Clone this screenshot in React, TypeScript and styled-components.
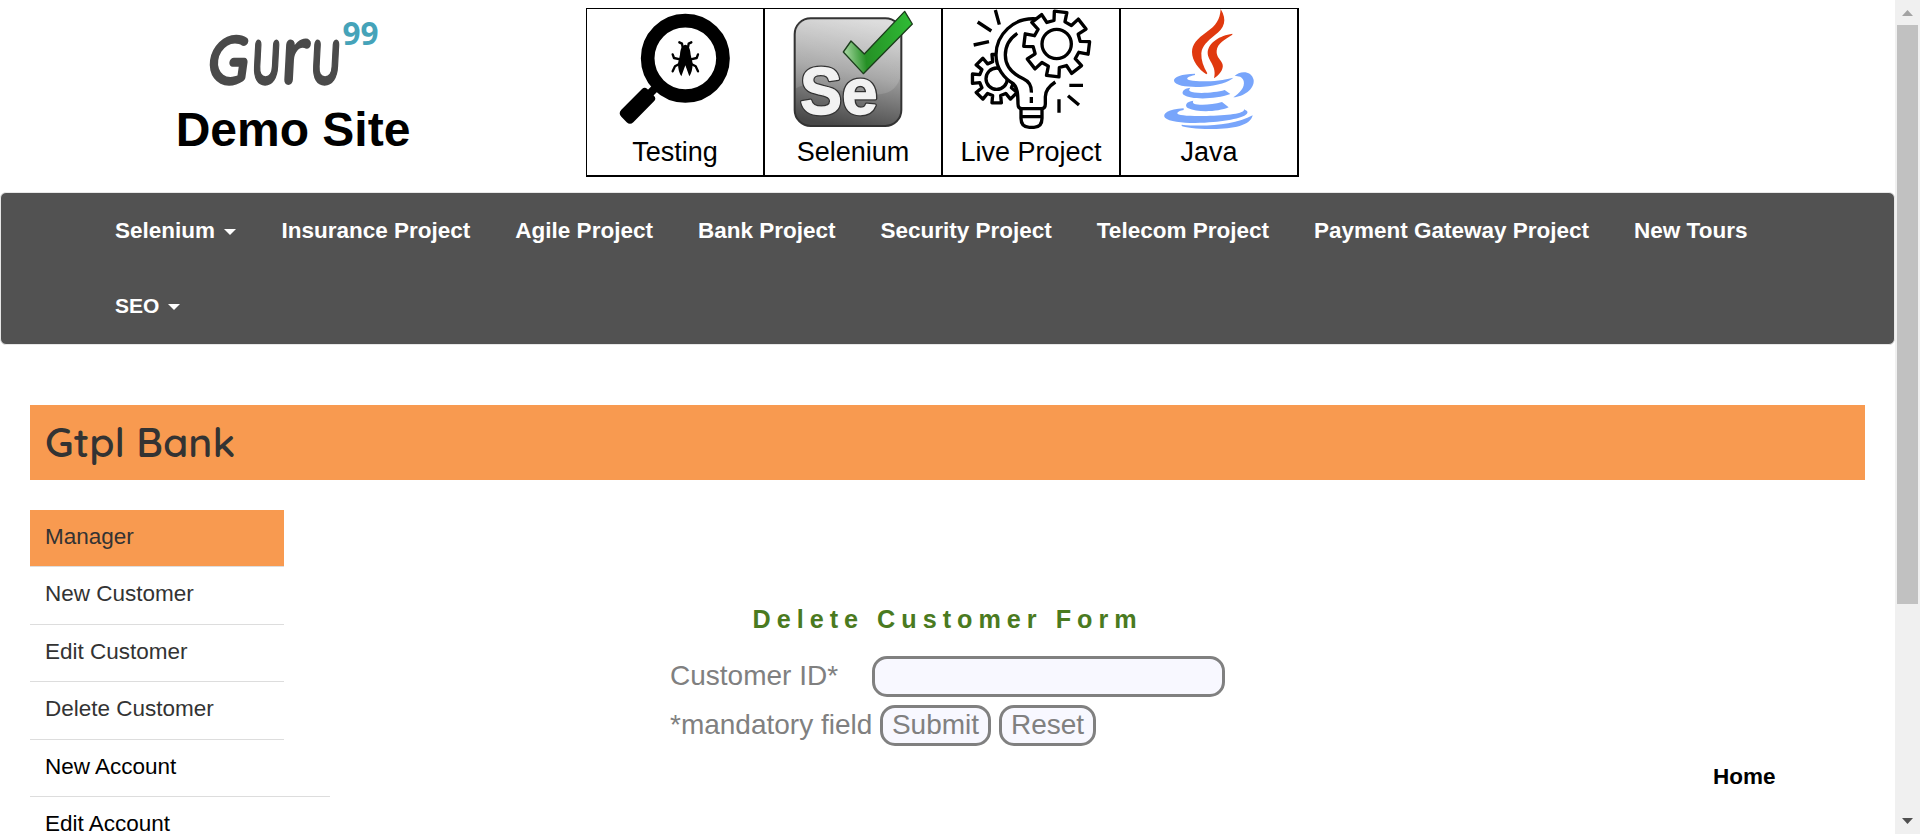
import React from "react";
import styled, { createGlobalStyle } from "styled-components";

const GlobalStyle = createGlobalStyle`
  * { box-sizing: border-box; }
  body {
    margin: 0;
    background: #fff;
    font-family: "Liberation Sans", Arial, sans-serif;
    overflow: hidden;
  }
`;

const Window = styled.div`
  display: flex;
  height: 834px;
  overflow: hidden;
`;

const Page = styled.div`
  flex: 1;
  min-width: 0;
  height: 834px;
  overflow: hidden;
`;

/* Header */

const Header = styled.header`
  display: flex;
  align-items: flex-start;
  height: 192px;
`;

const Brand = styled.div`
  width: 586px;
  padding-top: 15px;
  display: flex;
  flex-direction: column;
  align-items: center;
`;

const BrandTitle = styled.h2`
  margin: 7px 0 0;
  font-size: 48px;
  line-height: 56px;
  font-weight: 700;
  color: #000;
`;

const LogoImage = styled.svg`
  display: block;
  width: 190px;
  height: 80px;
  overflow: visible;
`;

const CourseTable = styled.div`
  display: flex;
  margin-top: 8px;
  border-top: 1px solid #000;
  border-left: 1px solid #000;
`;

const CourseCell = styled.div`
  width: 178px;
  height: 168px;
  border-right: 2px solid #000;
  border-bottom: 2px solid #000;
  display: flex;
  flex-direction: column;
  align-items: center;
`;

const CourseIcon = styled.svg`
  display: block;
  width: 120px;
  height: 120px;
  overflow: visible;
`;

const CourseLabel = styled.span`
  font-size: 27px;
  line-height: 46px;
  color: #000;
`;

/* Navigation */

const NavBar = styled.nav`
  height: 153px;
  border: 1px solid #e7e7e7;
  border-radius: 6px;
  background: #525252;
  padding: 0 91.5px;
`;

const NavList = styled.ul`
  display: flex;
  flex-wrap: wrap;
  margin: 0;
  padding: 0;
  list-style: none;
`;

const NavItem = styled.li<{ $small?: boolean }>`
  display: flex;
  align-items: center;
  padding: 0 22.5px;
  height: 75px;
  font-size: ${(p) => (p.$small ? 21 : 22.5)}px;
  font-weight: 700;
  color: #fff;
  white-space: nowrap;
`;

const Caret = styled.span`
  margin: 3px 0.5px 0 9px;
  border-top: 6px solid #fff;
  border-left: 6px solid transparent;
  border-right: 6px solid transparent;
`;

/* Bank section */

const BankBanner = styled.div`
  margin: 60px 30px 30px;
  height: 75px;
  padding-left: 15px;
  display: flex;
  align-items: center;
  background: #f89a50;
`;

const BankTitle = styled.h2`
  margin: 0 0 2px;
  font-family: Quicksand, Inter, sans-serif;
  font-size: 40.8px;
  font-weight: 600;
  color: #333;
`;

const Columns = styled.div`
  display: flex;
  align-items: flex-start;
  padding-left: 30px;
`;

const Menu = styled.ul`
  width: 640px;
  margin: 0;
  padding: 0;
  list-style: none;
`;

const MenuItem = styled.li<{ $active?: boolean; $wide?: boolean }>`
  width: ${(p) => (p.$wide ? 300 : 254)}px;
  height: 57.4px;
  padding-left: 15px;
  border-bottom: 1px solid #ddd;
  background: ${(p) => (p.$active ? "#f89a50" : "transparent")};
  color: ${(p) => (p.$wide ? "#000" : "#333")};
  font-size: 22.5px;
  line-height: 54.5px;
`;

const Form = styled.form`
  width: 556px;
  padding-top: 94px;
  color: #808080;
  font-size: 28px;
`;

const FormTitle = styled.p`
  margin: 0 0 22px 82.5px;
  font-size: 25.2px;
  line-height: 30px;
  font-weight: 700;
  letter-spacing: 6px;
  color: #4a7a20;
  white-space: nowrap;
`;

const FormRow = styled.div`
  display: flex;
  align-items: center;
  height: 41px;
  margin-bottom: 8px;
`;

const FieldLabel = styled.label`
  width: 202px;
  margin-right: ${(p: { $gap?: number }) => p.$gap ?? 0}px;
  line-height: 38px;
  padding-bottom: 1px;
  white-space: nowrap;
`;

const TextInput = styled.input`
  width: 353px;
  height: 41px;
  border: 3px solid #808080;
  border-radius: 15px;
  background: #f8f8ff;
  outline: none;
`;

const FormButton = styled.button<{ $width: number }>`
  width: ${(p) => p.$width}px;
  height: 41px;
  margin-right: 8px;
  padding: 0 0 2px;
  border: 3px solid #808080;
  border-radius: 15px;
  background: #f8f8ff;
  color: #808080;
  font-family: inherit;
  font-size: 28px;
  line-height: 32px;
`;

const HomeLink = styled.a`
  margin: 253px 0 0 487px;
  font-size: 22.5px;
  line-height: 28px;
  font-weight: 700;
  color: #000;
`;

/* Scrollbar */

const ScrollTrack = styled.div`
  width: 25px;
  height: 834px;
  padding: 10px 0;
  background: #f0f0f0;
  display: flex;
  flex-direction: column;
  align-items: center;
`;

const ArrowIcon = styled.svg`
  display: block;
  width: 11px;
  height: 6px;
`;

const ScrollThumb = styled.div`
  width: 21px;
  height: 579px;
  margin: 9px 0 auto;
  background: #c1c1c1;
`;

/* Drawings */

const GuruLogo = () => (
  <LogoImage viewBox="198 15 190 80">
    <g fill="#4a4a4a" stroke="#4a4a4a" strokeWidth="2" strokeLinejoin="round" fontFamily="Quicksand, Lato, sans-serif" fontWeight="600">
      <text transform="translate(205 84) skewX(-8) scale(.88 1)" fontSize="68">G</text>
      <text transform="translate(250 84) skewX(-3) scale(.58 .92)" fontSize="90">u</text>
      <text transform="translate(280 84) skewX(-3) scale(.78 .92)" fontSize="90">r</text>
      <text transform="translate(309 84) skewX(-3) scale(.6 .92)" fontSize="90">u</text>
    </g>
    <text x="342.5" y="44.5" fontFamily="Open Sans" fontWeight="700" fontSize="31.5" fill="#45a3b9">99</text>
  </LogoImage>
);

const TestingIcon = () => (
  <CourseIcon viewBox="105 27 360 360">
    <circle cx="316" cy="175" r="113" fill="none" stroke="#000" strokeWidth="41" />
    <path d="M202 288L234 256" stroke="#000" strokeWidth="24" />
    <path d="M186 267Q194 260 202 267L222 287Q230 296 222 304L160 367Q150 376 140 367L124 350Q114 339 124 329Z" fill="#000" />
    <path d="M316 134C329 137 331 151 332 164L338 190Q338 214 328 229L316 196L304 229Q294 214 294 190L300 164C301 151 303 137 316 134Z" fill="#000" />
    <path
      d="M308 142L306 131L298 127M324 142L326 131L334 127M300 178L282 174L278 163M332 178L350 174L354 163M298 192L285 199L278 214M334 192L347 199L354 214"
      fill="none" stroke="#000" strokeWidth="7" strokeLinecap="round" strokeLinejoin="round"
    />
  </CourseIcon>
);

const SeleniumIcon = () => (
  <CourseIcon viewBox="99 27 360 360">
    <defs>
      <linearGradient id="tile" x1="0.6" y1="0" x2="0.4" y2="1">
        <stop offset="0" stopColor="#d2d2d2" />
        <stop offset="0.5" stopColor="#999" />
        <stop offset="1" stopColor="#484848" />
      </linearGradient>
      <linearGradient id="gloss" x1="0" y1="0" x2="0" y2="1">
        <stop offset="0" stopColor="#fff" stopOpacity="0.25" />
        <stop offset="1" stopColor="#fff" stopOpacity="0.12" />
      </linearGradient>
      <linearGradient id="tick" x1="0" y1="0.5" x2="1" y2="0.4">
        <stop offset="0" stopColor="#a5d6a0" />
        <stop offset="0.3" stopColor="#259025" />
        <stop offset="1" stopColor="#2fbb35" />
      </linearGradient>
    </defs>
    <rect x="104" y="55" width="320" height="323" rx="48" fill="url(#tile)" stroke="#333" strokeWidth="6" />
    <path d="M108 100Q108 60 152 59H376Q420 60 420 104V235C405 280 370 290 300 282C210 270 150 240 108 265Z" fill="url(#gloss)" />
    <g fontFamily="Liberation Sans" fontWeight="700" strokeLinejoin="round">
      <g fill="#333" stroke="#333" strokeWidth="12">
        <text x="120" y="341" fontSize="202" textLength="126" lengthAdjust="spacingAndGlyphs">S</text>
        <text x="246" y="341" fontSize="192">e</text>
      </g>
      <g fill="#f2f2f2" stroke="#f2f2f2" strokeWidth="4">
        <text x="120" y="341" fontSize="202" textLength="126" lengthAdjust="spacingAndGlyphs">S</text>
        <text x="246" y="341" fontSize="192">e</text>
      </g>
    </g>
    <path d="M250 156L273 123L313 162L434 34L457 72L310 221Z" fill="url(#tick)" stroke="#1c3d1c" strokeWidth="4" strokeLinejoin="round" />
  </CourseIcon>
);

function gearPath(cx: number, cy: number, outer: number, root: number, turn: number) {
  const points: string[] = [];
  for (let i = 0; i < 8; i++) {
    const mid = turn + i * 45;
    const corners: [number, number][] = [[-13.5, root], [-11, outer], [11, outer], [13.5, root]];
    for (const [offset, r] of corners) {
      const a = ((mid + offset) * Math.PI) / 180;
      points.push(`${(cx + r * Math.sin(a)).toFixed(1)} ${(cy - r * Math.cos(a)).toFixed(1)}`);
    }
  }
  return `M${points.join("L")}Z`;
}

const LiveProjectIcon = () => (
  <CourseIcon viewBox="93 27 360 360">
    <g fill="#fff" stroke="#000" strokeWidth="10" strokeLinejoin="round">
      <path d={gearPath(170, 236, 74, 52, 0)} />
      <circle cx="170" cy="236" r="32" />
      <path d="M292 57C220 50 168 105 168 165C168 205 193 235 220 251C232 262 234 280 234 312Q234 326 246 326H304Q316 326 316 312V290C316 270 328 258 346 246L360 180Z" stroke="none" />
      <path d="M292 57C220 50 168 105 168 165C168 205 193 235 220 251C232 262 234 280 234 312Q234 326 246 326H304Q316 326 316 312V290C316 270 328 258 346 246" fill="none" />
      <path d="M232 100C205 118 196 140 196 165C196 205 225 225 250 236C268 244 275 258 274 278M274 291V309" fill="none" />
      <path d="M243 326V355Q243 382 268 382H282Q306 382 306 355V326M243 350H306" fill="none" />
      <path d={gearPath(350, 132, 99, 71, 7)} />
      <circle cx="350" cy="132" r="44" />
      <path d="M166 30L178 74M113 66L154 93M101 135L147 125M388 256H429M384 287L417 315M357 298V338" fill="none" />
    </g>
  </CourseIcon>
);

const JavaIcon = () => (
  <CourseIcon viewBox="117 27 360 360">
    <g fill="#e0390f">
      <path d="M332 27C330 60 318 76 290 96C262 116 246 132 246 156C246 182 266 208 289 223L292 220C280 200 273 180 274 160C276 138 292 124 314 106C344 84 352 60 332 27Z" />
      <path d="M367 101C330 106 294 128 293 158C293 182 322 198 312 235C328 224 341 208 338 194C335 180 318 172 320 152C322 130 345 118 367 104Z" />
    </g>
    <g fill="#78a5fb">
      <path d="M255 221C215 222 190 230 192 243C196 260 245 262 280 260C322 257 358 246 370 233C330 244 270 247 240 241C222 236 236 229 255 225Z" />
      <path d="M374 228C388 212 425 210 431 240C434 268 400 290 370 292C388 280 406 262 401 243C397 230 386 228 374 228Z" />
      <path d="M241 263C220 265 212 278 222 285C242 299 315 299 361 282L344 270C315 279 255 282 240 274C236 270 238 267 241 263Z" />
      <path d="M250 302C228 304 222 318 235 325C262 338 325 336 356 322L336 306C305 315 266 316 252 311C248 308 248 305 250 302Z" />
      <path d="M221 325C175 327 155 342 165 353C182 370 260 371 310 366C370 361 422 348 411 333L402 328C406 341 350 347 290 348C240 349 202 347 202 340C202 335 212 331 221 330Z" />
      <path d="M215 374C280 381 375 376 428 346C422 378 365 388 300 387C260 387 222 382 215 378Z" />
    </g>
  </CourseIcon>
);

const courses = [
  { name: "Testing", Icon: TestingIcon },
  { name: "Selenium", Icon: SeleniumIcon },
  { name: "Live Project", Icon: LiveProjectIcon },
  { name: "Java", Icon: JavaIcon },
];

const navItems = [
  { label: "Selenium", menu: true },
  { label: "Insurance Project" },
  { label: "Agile Project" },
  { label: "Bank Project" },
  { label: "Security Project" },
  { label: "Telecom Project" },
  { label: "Payment Gateway Project" },
  { label: "New Tours" },
  { label: "SEO", menu: true, small: true },
];

const menuItems = [
  { label: "Manager", active: true },
  { label: "New Customer" },
  { label: "Edit Customer" },
  { label: "Delete Customer" },
  { label: "New Account", wide: true },
  { label: "Edit Account", wide: true },
];

export default function App() {
  return (
    <Window>
      <GlobalStyle />
      <Page>
        <Header>
          <Brand>
            <GuruLogo />
            <BrandTitle>Demo Site</BrandTitle>
          </Brand>
          <CourseTable>
            {courses.map(({ name, Icon }) => (
              <CourseCell key={name}>
                <Icon />
                <CourseLabel>{name}</CourseLabel>
              </CourseCell>
            ))}
          </CourseTable>
        </Header>
        <NavBar>
          <NavList>
            {navItems.map((item) => (
              <NavItem key={item.label} $small={item.small}>
                {item.label}
                {item.menu && <Caret />}
              </NavItem>
            ))}
          </NavList>
        </NavBar>
        <BankBanner>
          <BankTitle>Gtpl Bank</BankTitle>
        </BankBanner>
        <Columns>
          <Menu>
            {menuItems.map((item) => (
              <MenuItem key={item.label} $active={item.active} $wide={item.wide}>
                {item.label}
              </MenuItem>
            ))}
          </Menu>
          <Form>
            <FormTitle>Delete Customer Form</FormTitle>
            <FormRow>
              <FieldLabel htmlFor="cusid">Customer ID*</FieldLabel>
              <TextInput id="cusid" type="text" />
            </FormRow>
            <FormRow>
              <FieldLabel as="span" $gap={8}>*mandatory field</FieldLabel>
              <FormButton type="button" $width={111}>Submit</FormButton>
              <FormButton type="button" $width={97}>Reset</FormButton>
            </FormRow>
          </Form>
          <HomeLink>Home</HomeLink>
        </Columns>
      </Page>
      <ScrollTrack>
        <ArrowIcon viewBox="0 0 11 6">
          <path d="M0 6L5.5 0L11 6Z" fill="#a3a3a3" />
        </ArrowIcon>
        <ScrollThumb />
        <ArrowIcon viewBox="0 0 11 6">
          <path d="M0 0H11L5.5 6Z" fill="#505050" />
        </ArrowIcon>
      </ScrollTrack>
    </Window>
  );
}
